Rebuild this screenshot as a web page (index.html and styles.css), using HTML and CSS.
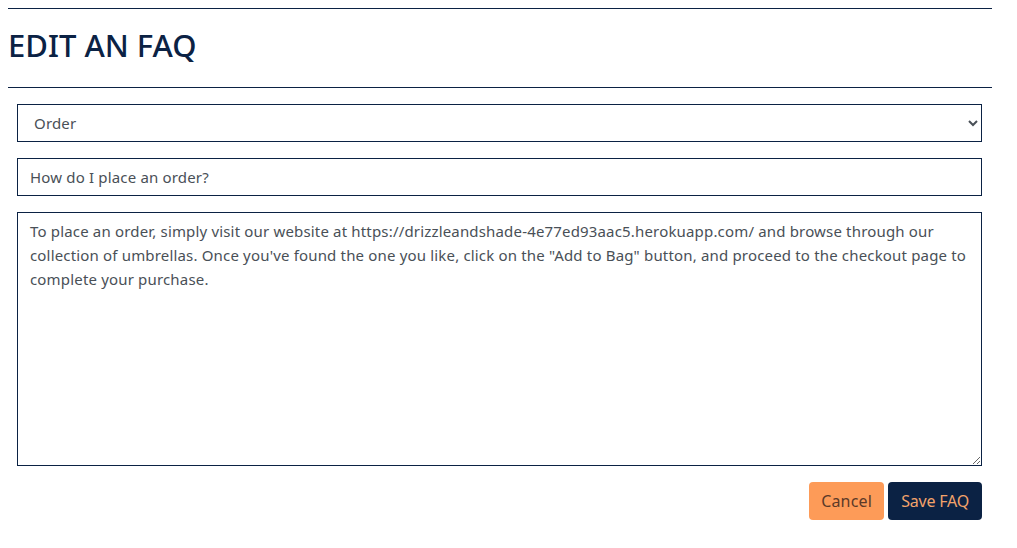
FILE: index.html
```html
<!DOCTYPE html>
<html lang="en">
<head>
<meta charset="utf-8">
<title>Edit an FAQ</title>
<link rel="stylesheet" href="styles.css">
</head>
<body>
<div class="page">
  <hr class="rule">
  <h1 class="title">EDIT AN FAQ</h1>
  <hr class="rule">
  <form class="faq-form">
    <select class="field">
      <option selected>Order</option>
      <option>Delivery</option>
      <option>Returns</option>
    </select>
    <input class="field" type="text" value="How do I place an order?">
    <textarea class="field area" rows="10">To place an order, simply visit our website at https://drizzleandshade-4e77ed93aac5.herokuapp.com/ and browse through our collection of umbrellas. Once you've found the one you like, click on the "Add to Bag" button, and proceed to the checkout page to complete your purchase.</textarea>
    <div class="actions">
      <a class="btn btn-cancel" href="#">Cancel</a>
      <button class="btn btn-save" type="button">Save FAQ</button>
    </div>
  </form>
</div>
</body>
</html>
```
FILE: styles.css
```css
* { box-sizing: border-box; }
html, body { margin: 0; background: #fff; }
body {
  padding: 8px;
  font-family: "Noto Sans", "Open Sans", sans-serif;
  color: #0b2244;
}
.page { width: 984px; }
.rule {
  margin: 0;
  border: 0;
  border-top: 1px solid #0b2244;
}
.title {
  margin: 0;
  padding: 18px 0 23px;
  font-size: 31px;
  line-height: 37px;
  font-weight: 500;
  letter-spacing: 0;
  color: #0b2244;
}
.faq-form {
  display: flex;
  flex-direction: column;
  gap: 16px;
  padding: 16px 10px 0 9px;
}
.field {
  display: block;
  width: 100%;
  height: 38px;
  margin: 0;
  padding: 6px 12px;
  font-family: inherit;
  font-size: 15px;
  line-height: 24px;
  letter-spacing: 0.17px;
  color: #495057;
  background: #fff;
  border: 1px solid #0b2244;
  border-radius: 0;
  outline: none;
}
select.field { padding-left: 12px; }
.area {
  height: 254px;
  resize: vertical;
}
.actions {
  display: flex;
  justify-content: flex-end;
  gap: 4px;
}
.btn {
  display: inline-block;
  height: 38px;
  padding: 6px 12px;
  font-family: inherit;
  font-size: 16px;
  line-height: 24px;
  border: 1px solid transparent;
  border-radius: 4px;
  text-decoration: none;
  cursor: pointer;
}
.btn-cancel {
  background: #fd9b58;
  color: #5b3a28;
  padding: 6px 11px;
  letter-spacing: 0.2px;
}
.btn-save {
  background: #0b2244;
  color: #f3a36b;
  padding: 6px 12px;
  letter-spacing: -0.2px;
}
```
